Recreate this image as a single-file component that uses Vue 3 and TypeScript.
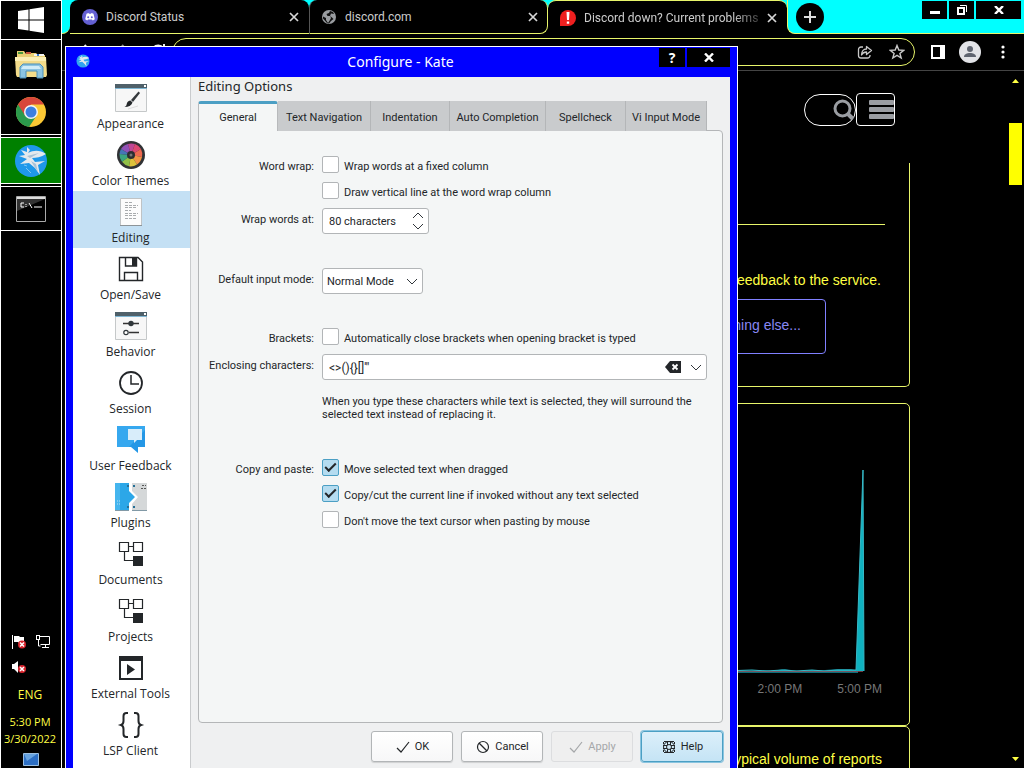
<script setup lang="ts">
import { ref } from 'vue'

interface BrowserTab { title: string; icon: 'discord' | 'globe' | 'alert'; active: boolean }

const browserTabs: BrowserTab[] = [
  { title: 'Discord Status', icon: 'discord', active: false },
  { title: 'discord.com', icon: 'globe', active: false },
  { title: 'Discord down? Current problems', icon: 'alert', active: true },
]

const sections: string[] = [
  'Appearance', 'Color Themes', 'Editing', 'Open/Save', 'Behavior', 'Session',
  'User Feedback', 'Plugins', 'Documents', 'Projects', 'External Tools', 'LSP Client',
]
const section = ref('Editing')

const pages: string[] = ['General', 'Text Navigation', 'Indentation', 'Auto Completion', 'Spellcheck', 'Vi Input Mode']
const page = ref('General')

const wrapFixed = ref(false)
const drawLine = ref(false)
const wrapAt = ref(80)
const inputMode = ref('Normal Mode')
const autoBrackets = ref(false)
const enclosing = ref('<>(){}[]\'"')
const moveDragged = ref(true)
const copyLine = ref(true)
const keepCursor = ref(false)
</script>

<template>
  <div class="desktop">
    <aside class="taskbar">
      <button class="task start" aria-label="Start">
        <svg width="28" height="26" viewBox="0 0 28 26" fill="#fff">
          <path d="M1 4 11.500 2.500V12.500H1zM12.500 2.300 27 0V12.500H12.500zM1 13.500H11.500V23.500L1 22zM12.500 13.500H27V26L12.500 23.700z" />
        </svg>
      </button>
      <button class="task explorer" aria-label="File Explorer">
        <svg width="34" height="32" viewBox="0 0 34 32">
          <path d="M3 6V2h7l2 3h4V4h6l2 2h7v6H3z" fill="#e9cf73" />
          <path d="M4 3h5v2H4z" fill="#4a9a3e" /><path d="M12 3h5v2h-5z" fill="#c8543c" /><path d="M20 5h10v2H20z" fill="#f2f2f2" /><path d="M23 5h2v2h-2z" fill="#3a78c8" />
          <path d="M1 8h31l1 18-1 2H3l-1-2z" fill="#f3dc8b" />
          <path d="M1 8h31v4H1z" fill="#fbeeb4" />
          <path d="M6 29V18l3-3h17l3 3v11h-6v-7H12v7z" fill="#8cc4e2" stroke="#4b8fb8" />
          <path d="M9 17h16l2 3H7z" fill="#d1ecf8" />
        </svg>
      </button>
      <button class="task chrome" aria-label="Google Chrome">
        <svg width="32" height="32" viewBox="0 0 32 32">
          <circle cx="16" cy="16" r="15" fill="#fbc834" />
          <path d="M16 16 3 8.500A15 15 0 0 0 14 31l8-12z" fill="#2b9a4c" />
          <path d="M3 8.500A15 15 0 0 1 29 8.500H16l-6 11z" fill="#d8463a" />
          <circle cx="16" cy="16" r="7" fill="#f4f4f4" /><circle cx="16" cy="16" r="5.500" fill="#3c7fe0" />
        </svg>
      </button>
      <button class="task kate" aria-label="Kate">
        <svg width="34" height="34" viewBox="0 0 34 34">
          <circle cx="17" cy="17" r="16" fill="#1f98ea" />
          <path d="M13 3 16 6 14 9C20 6 26 6 32 10 27 13 22 14 18 14L21 18 31 17 24 21 26 31 21 24 15 19 6 20 13 15 5 12 11 11 7 6 13 8z" fill="#e4e9ed" />
          <path d="M13 12 25 9l-9 5zM17 17l5 3 2 8-4-6z" fill="#a9c2d6" />
          <path d="M12 24l5 5M10 21l3 1" stroke="#7cc4f4" />
        </svg>
      </button>
      <button class="task cmd" aria-label="Command Prompt">
        <svg width="30" height="26" viewBox="0 0 30 26">
          <path d="M.5.5h29v25H.5z" fill="#000" stroke="#aaa" /><path d="M1 1h28v2H1z" fill="#ddd" /><path d="M1 3h28L1 15z" fill="#333" />
          <path d="M8 7H5v4h3M10 8v1M10 10v1M13 7l3 5M18 11h8" fill="none" stroke="#fff" />
        </svg>
      </button>
      <div class="tray">
        <div class="tray-icons">
          <svg width="16" height="16" viewBox="0 0 16 16">
            <path d="M1.500 1v14" stroke="#fff" /><path d="M3 2h5l1 1h4v6H8L7 8H3z" fill="#fff" />
            <circle cx="11" cy="10.500" r="4" fill="#d8232c" /><path d="m9 8.500 4 4m0-4-4 4" stroke="#fff" stroke-width="1.500" />
          </svg>
          <svg width="16" height="16" viewBox="0 0 16 16" fill="none" stroke="#fff">
            <path d="M5 2.500h9.500v8H5.500M7 13.500h7M10.500 11v2" /><rect x="1.500" y="1.500" width="3" height="4" /><path d="M3.500 6v6h2" />
          </svg>
          <svg width="16" height="16" viewBox="0 0 16 16">
            <path d="M1 5h2l4-3v12l-4-4H1z" fill="#fff" />
            <circle cx="11" cy="10" r="4" fill="#d8232c" /><path d="m9 8 4 4m0-4-4 4" stroke="#fff" stroke-width="1.500" />
          </svg>
        </div>
        <div class="lang">ENG</div>
        <div class="clock"><div>5:30 PM</div><div>3/30/2022</div></div>
        <svg class="show-desktop" width="16" height="13" viewBox="0 0 16 13"><path d="M.5.500h15v12H.5z" fill="#2d6fc4" stroke="#9bbfe0" /><path d="M1 1h13L4 8z" fill="#68a4e0" /></svg>
      </div>
    </aside>

    <main class="browser">
      <div class="tabstrip">
        <div class="lead"></div>
        <div v-for="tab in browserTabs" :key="tab.title" class="tab-slot">
          <div class="tab" :class="[{ active: tab.active }, tab.icon]">
            <svg v-if="tab.icon === 'discord'" width="16" height="16" viewBox="0 0 16 16">
              <circle cx="8" cy="8" r="8" fill="#6460d2" /><path d="M4.500 4.700 6.500 4l.5.8h2l.5-.8 2 .7 1.300 5.600-2 1.200-.8-1H6l-.8 1-2-1.200z" fill="#fff" /><circle cx="6.200" cy="8.300" r="1" fill="#6460d2" /><circle cx="9.800" cy="8.300" r="1" fill="#6460d2" />
            </svg>
            <svg v-else-if="tab.icon === 'globe'" width="16" height="16" viewBox="0 0 16 16">
              <circle cx="8" cy="8" r="7" fill="#999ca0" /><path d="M9 2 8 4 5.500 5l1 2H9l1 2-1 2-2 3-2-3V9L2 7.500v2L6 14l2 .5L10 12l2.500-2L11 8.500 9 7l1-2.500 3 .5-1-2z" fill="#111" />
            </svg>
            <svg v-else width="16" height="16" viewBox="0 0 16 16">
              <path d="M0 16V8a8 8 0 1 1 8 8z" fill="#ee1f1f" /><path d="M6.500 2h3L9 10H7zM6.800 11.500h2.400v2.200H6.800z" fill="#fff" />
            </svg>
            <span class="tab-title">{{ tab.title }}</span>
            <button class="tab-close" aria-label="Close tab">
              <svg width="10" height="10" viewBox="0 0 10 10"><path d="m1 1 8 8m0-8-8 8" stroke="#d8d8d8" stroke-width="1.700" /></svg>
            </button>
          </div>
        </div>
        <div class="strip-rest">
          <button class="new-tab" aria-label="New tab"><svg width="14" height="14" viewBox="0 0 14 14"><path d="M7 1v12M1 7h12" stroke="#ddd" stroke-width="2" /></svg></button>
          <div class="win-controls">
            <button class="wc" aria-label="Minimize"><svg width="10" height="10" viewBox="0 0 10 10"><path d="M0 6h10v3H0z" fill="#fff" /></svg></button>
            <button class="wc" aria-label="Restore"><svg width="10" height="10" viewBox="0 0 10 10" fill="none" stroke="#fff"><path d="M1 3h6v6H1z" stroke-width="2" /><path d="M3 .5h6.500V7" /></svg></button>
            <button class="wc wide" aria-label="Close window"><svg width="10" height="8" viewBox="0 0 10 8"><path d="m1 0 8 8m0-8-8 8" stroke="#fff" stroke-width="2.400" /></svg></button>
          </div>
        </div>
      </div>
      <div class="toolbar">
        <div class="nav-icons">
          <svg width="16" height="16" viewBox="0 0 16 16" fill="none" stroke="#eee" stroke-width="2"><path d="M15 8H2m6-7L2 8l6 7" /></svg>
          <svg width="16" height="16" viewBox="0 0 16 16" fill="none" stroke="#888" stroke-width="2"><path d="M1 8h13M8 1l6 7-6 7" /></svg>
          <svg width="16" height="16" viewBox="0 0 16 16" fill="none" stroke="#eee" stroke-width="2"><path d="M13 4a6 6 0 1 0 1 5M14 0v5H9" /></svg>
        </div>
        <div class="omnibox">
          <svg width="16" height="16" viewBox="0 0 16 16" fill="none" stroke="#c8c8c8" stroke-width="1.300"><path d="M6 3H4a2.500 2.500 0 0 0-2.500 2.500v6A2.500 2.500 0 0 0 4 14h6.500a2.500 2.500 0 0 0 2.500-2.500V11" /><path d="M9.500 2.500 14.500 6.500l-5 4V8C7 8 5.500 9 4.500 11 4.500 7.500 6.500 5 9.500 5z" stroke-linejoin="round" /></svg>
          <svg width="16" height="16" viewBox="0 0 16 16" fill="none" stroke="#c8c8c8" stroke-width="1.400"><path d="m8 1.500 1.800 4.500 4.900.3-3.800 3.100L12.200 14 8 11.400 3.800 14l1.300-4.600L1.300 6.300 6.200 6z" /></svg>
        </div>
        <svg class="panel-icon" width="14" height="14" viewBox="0 0 14 14"><path d="M1 1h12v12H1z" fill="none" stroke="#fff" stroke-width="2" /><path d="M9 1h4v12H9z" fill="#fff" /></svg>
        <svg class="avatar" width="22" height="22" viewBox="0 0 22 22"><circle cx="11" cy="11" r="11" fill="#e2e3e7" /><circle cx="11" cy="8" r="3" fill="#5f6470" /><path d="M5 16c0-3 3-4 6-4s6 1 6 4z" fill="#5f6470" /></svg>
        <svg class="dots" width="4" height="14" viewBox="0 0 4 14" fill="#fff"><circle cx="2" cy="2" r="1.600" /><circle cx="2" cy="7" r="1.600" /><circle cx="2" cy="12" r="1.600" /></svg>
      </div>
      <div class="viewport">
        <div class="webpage">
          <header class="site-header">
            <button class="search" aria-label="Search"><svg width="22" height="22" viewBox="0 0 22 22" fill="none" stroke="#9a9da2"><circle cx="9.500" cy="9.500" r="7.500" stroke-width="3" /><path d="m15 15 5 5" stroke-width="4" /></svg></button>
            <button class="menu" aria-label="Menu"><svg width="25" height="20" viewBox="0 0 25 20" fill="#9a9da2"><rect width="25" height="5" rx="1" /><rect y="7" width="25" height="5" rx="1" /><rect y="14" width="25" height="5" rx="1" /></svg></button>
          </header>
          <section class="card report">
            <div class="rule"></div>
            <p class="say">feedback to the service.</p>
            <a class="other" href="#other">Something else...</a>
          </section>
          <section class="card chart">
            <svg width="172" height="206" viewBox="0 0 172 206">
              <path d="M0 202l14 1 8-1 12 1 14-2 12 2 14-1 14 0 12-1 14 0 7 2V205H0z" fill="#0c6f7c" />
              <path d="M0 202.500 15 202l14 1 16-1 14 1 16-1 12 1 14-1 18 0 7-200 1 201" fill="#0fb2c0" stroke="#37bac8" />
              <path d="M0 203.500h126" stroke="#a04d58" stroke-width=".7" />
            </svg>
            <div class="times"><span>2:00 PM</span><span>5:00 PM</span></div>
          </section>
          <section class="card volume"><p>typical volume of reports</p></section>
        </div>
        <div class="scroll">
          <svg width="7" height="4" viewBox="0 0 7 4"><path d="M0 4 3.500 0 7 4z" fill="#ff4" /></svg>
          <div class="thumb"></div>
          <svg class="down" width="7" height="4" viewBox="0 0 7 4"><path d="M0 0h7L3.500 4z" fill="#ff4" /></svg>
        </div>
      </div>
    </main>

    <div class="dialog" role="dialog" aria-labelledby="dialog-title">
      <div class="titlebar">
        <svg width="14" height="14" viewBox="0 0 34 34"><circle cx="17" cy="17" r="16" fill="#2fa4f0" /><path d="M13 3 16 6 14 9C20 6 26 6 32 10 27 13 22 14 18 14L21 18 31 17 24 21 26 31 21 24 15 19 6 20 13 15 5 12 11 11 7 6 13 8z" fill="#e4e9ed" /></svg>
        <h1 id="dialog-title">Configure - Kate</h1>
        <div class="title-buttons">
          <button class="tb" aria-label="What's this">?</button>
          <button class="tb close" aria-label="Close"><svg width="10" height="9" viewBox="0 0 10 9"><path d="m1 .5 8 8m0-8-8 8" stroke="#fff" stroke-width="2.400" /></svg></button>
        </div>
      </div>
      <div class="dialog-body">
        <nav class="sections">
          <button v-for="s in sections" :key="s" class="section" :class="{ current: s === section }" @click="section = s">
            <svg width="32" height="32" viewBox="0 0 32 32" fill="none">
              <template v-if="s === 'Appearance' || s === 'Behavior'">
                <path d="M.5 3.500h31V29.500H.5z" fill="#f7f7f7" stroke="#c5c8c9" /><path d="M0 2h32v5H0z" fill="#4f6069" /><path d="M0 6.500h32" stroke="#7fb6d3" /><path d="M29 3h2v2h-2z" fill="#fff" />
                <template v-if="s === 'Appearance'"><path d="M23.500 9.500 16 18l2 2 7-9z" fill="#35393c" /><path d="m15.500 18.500 2 2c-1 3-4 4.500-8 4.500 2-1 2-2 2.500-4 .5-1.500 2-2.500 3.500-2.500z" fill="#25292b" /><path d="m13 27 10-3" stroke="#ddd" /></template>
                <template v-else><path d="M8 13.500h16M14 22.500h10" stroke="#333" stroke-width="1.300" /><circle cx="16" cy="13.500" r="2.700" fill="#30363a" /><circle cx="11" cy="22.500" r="2.200" fill="#fff" stroke="#30363a" stroke-width="1.200" /></template>
              </template>
              <template v-else-if="s === 'Color Themes'">
                <circle cx="16" cy="16" r="14" fill="#303235" />
                <path d="M16 16 6 10A11.500 11.500 0 0 1 13 4.900z" fill="#9152b7" /><path d="m16 16-3-11.100a11.500 11.500 0 0 1 7 .2z" fill="#c04795" /><path d="m16 16 4-10.900a11.500 11.500 0 0 1 6 5z" fill="#dd4872" />
                <path d="m16 16 10-5.900a11.500 11.500 0 0 1 1 8z" fill="#ef6950" /><path d="m16 16 11 2.100a11.500 11.500 0 0 1-5 7.400z" fill="#f29544" /><path d="m16 16 6 9.500a11.500 11.500 0 0 1-8 1.800z" fill="#ddc23b" /><path d="m16 16-2 11.300a11.500 11.500 0 0 1-7-4.500z" fill="#91bf47" /><path d="m16 16-9 6.800A11.500 11.500 0 0 1 4.500 15z" fill="#3aa580" /><path d="M16 16 4.500 15A11.500 11.500 0 0 1 6 10z" fill="#4576b7" />
                <circle cx="16" cy="16" r="4" fill="#2c2e31" /><circle cx="16" cy="16" r="1.500" fill="#777" />
              </template>
              <template v-else-if="s === 'Editing'">
                <path d="M5.500 2.500h21v27h-21z" fill="#fcfcfc" stroke="#bfc3c5" /><path d="M5 29.500h22" stroke="#8d9498" /><path d="M10 6.500h7M10 9.500h13M10 11.500h12M10 14.500h6M10 17.500h13M10 19.500h11M10 22.500h12" stroke="#a8abad" stroke-dasharray="3 1" />
              </template>
              <template v-else-if="s === 'Open/Save'">
                <path d="M4.500 4.500H23l4.500 4.500v18.500h-23zM10.500 5v8h11V5M9.500 27v-7.500h13V27" stroke="#232629" stroke-width="1.400" /><path d="M17 4h4v9h-4z" fill="#232629" />
              </template>
              <template v-else-if="s === 'Session'"><circle cx="16" cy="16" r="11" stroke="#232629" stroke-width="1.800" /><path d="M16 8v9h8" stroke="#232629" stroke-width="1.500" /></template>
              <template v-else-if="s === 'User Feedback'"><path d="M2 2h28v21h-7v6l-7-6H2z" fill="#2497e6" /><path d="M2 2h28v4L14 23H2z" fill="#36a8ef" /><path d="M13 5h14v11h-5l-3 3v-3h-6z" fill="#d8edfa" /></template>
              <template v-else-if="s === 'Plugins'">
                <path d="M0 2h14v8l6 6-6 6v8H0z" fill="#2ca7e8" /><path d="M0 2h5v28H0z" fill="#45b5ee" /><path d="M17 2h15v28H17v-7l6-7-6-6z" fill="#d5d8d9" /><path d="M0 29.500h14M17 29.500h15" stroke="#8199a6" /><path d="M2 20h4M2 23h4" stroke="#b8e0f5" stroke-dasharray="1 1" /><path d="M27 4.500h4M26 7.500h5" stroke="#555" stroke-dasharray="2 1" /><path d="M12 4h2v2h-2zM12 25h2v2h-2zM18 4h2v2h-2zM18 25h2v2h-2z" fill="#256f96" />
              </template>
              <template v-else-if="s === 'Documents' || s === 'Projects'">
                <path d="M4.500 4.500h9v9h-9zM18.500 4.500h9v9h-9zM14 8.500h4M9.500 14v8.500H18" stroke="#232629" stroke-width="1.200" /><path d="M18 18h10v10H18z" fill="#232629" />
              </template>
              <template v-else-if="s === 'External Tools'"><path d="M5 5h22v22H5z" stroke="#232629" stroke-width="2" /><path d="M4 4h24v5H4zM12 12v11l8-5.500z" fill="#232629" /></template>
              <template v-else><path d="M13 4h-1.500C9 4 8.500 5 8.500 7v5c0 2-1 3.500-2.500 4 1.500.5 2.500 2 2.500 4v5c0 2 .5 3 3 3H13M19 4h1.500c2.500 0 3 1 3 3v5c0 2 1 3.500 2.500 4-1.500.5-2.500 2-2.500 4v5c0 2-.5 3-3 3H19" stroke="#232629" stroke-width="2" /></template>
            </svg>
            <span>{{ s }}</span>
          </button>
        </nav>

        <div class="content">
          <h2>Editing Options</h2>
          <div class="pages" role="tablist">
            <button v-for="p in pages" :key="p" role="tab" class="page" :class="{ open: p === page }" :aria-selected="p === page" @click="page = p">{{ p }}</button>
          </div>
          <form class="panel" @submit.prevent>
            <div class="group">
              <span class="label">Word wrap:</span>
              <label class="check"><input v-model="wrapFixed" type="checkbox"><span>Wrap words at a fixed column</span></label>
              <label class="check second"><input v-model="drawLine" type="checkbox"><span>Draw vertical line at the word wrap column</span></label>
              <label class="label field-label" for="wrap-at">Wrap words at:</label>
              <div class="box spin">
                <input id="wrap-at" type="text" :value="`${wrapAt} characters`" readonly>
                <div class="steps">
                  <button type="button" aria-label="Increase" @click="wrapAt++"><svg width="12" height="7" viewBox="0 0 12 7"><path d="m1 6 5-5 5 5" fill="none" stroke="#31363b" /></svg></button>
                  <button type="button" aria-label="Decrease" @click="wrapAt--"><svg width="12" height="7" viewBox="0 0 12 7"><path d="m1 1 5 5 5-5" fill="none" stroke="#31363b" /></svg></button>
                </div>
              </div>
            </div>
            <div class="group">
              <label class="label field-label" for="mode">Default input mode:</label>
              <div class="box mode">
                <select id="mode" v-model="inputMode"><option>Normal Mode</option><option>Vi Mode</option></select>
                <svg width="12" height="7" viewBox="0 0 12 7"><path d="m1 1 5 5 5-5" fill="none" stroke="#31363b" /></svg>
              </div>
            </div>
            <div class="group">
              <span class="label">Brackets:</span>
              <label class="check"><input v-model="autoBrackets" type="checkbox"><span>Automatically close brackets when opening bracket is typed</span></label>
              <label class="label field-label" for="enclosing">Enclosing characters:</label>
              <div class="box combo">
                <input id="enclosing" v-model="enclosing" type="text">
                <button type="button" aria-label="Clear" @click="enclosing = ''"><svg width="16" height="12" viewBox="0 0 16 12"><path d="M0 6 5 0h11v12H5z" fill="#232629" /><path d="m7.500 3.500 5 5m0-5-5 5" stroke="#fff" stroke-width="1.800" /></svg></button>
                <button type="button" aria-label="Show choices"><svg width="12" height="7" viewBox="0 0 12 7"><path d="m1 1 5 5 5-5" fill="none" stroke="#31363b" /></svg></button>
              </div>
              <p class="note">When you type these characters while text is selected, they will surround the selected text instead of replacing it.</p>
            </div>
            <div class="group last">
              <span class="label">Copy and paste:</span>
              <label class="check"><input v-model="moveDragged" type="checkbox"><span>Move selected text when dragged</span></label>
              <label class="check second"><input v-model="copyLine" type="checkbox"><span>Copy/cut the current line if invoked without any text selected</span></label>
              <label class="check second"><input v-model="keepCursor" type="checkbox"><span>Don't move the text cursor when pasting by mouse</span></label>
            </div>
          </form>
          <div class="actions">
            <button class="action"><svg width="16" height="16" viewBox="0 0 16 16"><path d="m2 9 4 4 8-10" fill="none" stroke="#232629" stroke-width="1.200" /></svg>OK</button>
            <button class="action"><svg width="16" height="16" viewBox="0 0 16 16" fill="none" stroke="#232629" stroke-width="1.200"><circle cx="8" cy="8" r="5.500" /><path d="m4 4 8 8" /></svg>Cancel</button>
            <button class="action" disabled><svg width="16" height="16" viewBox="0 0 16 16"><path d="m2 9 4 4 8-10" fill="none" stroke="#a5a7a9" stroke-width="1.200" /></svg>Apply</button>
            <button class="action help"><svg width="16" height="16" viewBox="0 0 16 16" fill="none" stroke="#232629"><circle cx="8" cy="8" r="5.500" /><circle cx="8" cy="8" r="2.500" /><path d="M6.500 2v4M9.500 2v4M6.500 10v4M9.500 10v4M2 6.500h4M2 9.500h4M10 6.500h4M10 9.500h4M3 2.500h10M3 13.500h10M2.500 3v2M13.500 3v2M2.500 11v2M13.500 11v2" /></svg>Help</button>
          </div>
        </div>
      </div>
    </div>
  </div>
</template>

<style>
html, body { background: #000; overflow: hidden; }
</style>

<style scoped>
.desktop { position: relative; display: flex; height: 100vh; overflow: hidden; background: #000; font-family: "Open Sans", "Noto Sans", sans-serif; color: #232629; }
.desktop *, .desktop *::after { box-sizing: border-box; }
button { margin: 0; padding: 0; border: 0; background: none; font: inherit; color: inherit; display: flex; align-items: center; justify-content: center; }
svg { display: block; flex: none; }
h1, h2, p { margin: 0; font-weight: 400; }

.taskbar { display: flex; flex-direction: column; flex: 0 0 62px; border: 1px solid #fff; border-bottom: 0; }
.task { flex: none; height: 45px; border-bottom: 1px solid #fff; }
.task.start { height: 39px; }
.task.explorer { height: 50px; }
.task.kate { height: 47px; margin-top: 2px; border-top: 1px solid #fff; background: #008000; }
.task.cmd { height: 45px; margin-top: 2px; border-top: 1px solid #fff; }
.tray { margin-top: auto; display: flex; flex-direction: column; align-items: center; padding-right: 2px; color: #ff4; font-size: 12px; line-height: 17px; }
.tray-icons { display: grid; grid-template-columns: 16px 16px; gap: 9px 8px; padding-left: 2px; }
.lang { margin-top: 11px; }
.clock { margin-top: 10px; text-align: center; font-size: 11px; }
.show-desktop { margin: 6px 0 2px 2px; }

.browser { flex: 1; min-width: 0; display: flex; flex-direction: column; }
.tabstrip { display: flex; height: 34px; flex: none; }
.lead { width: 8px; background: #0ff; border-bottom: 1px solid #e8f56a; border-bottom-right-radius: 8px; }
.tab-slot { flex: 0 1 239px; min-width: 0; width: 239px; background: linear-gradient(#0ff 50%, #000 50%); }
.tab { height: 34px; display: flex; align-items: center; padding: 0 10px 0 12px; background: #000; border-radius: 8px 8px 0 0; border-bottom: 1px solid #e8f56a; color: #ccc; font-family: Roboto, sans-serif; font-size: 12px; }
.tab.globe { border-left: 1px solid #555; border-right: 1px solid #e8f56a; border-bottom-right-radius: 8px; padding: 0 9px 0 11px; }
.tab.active { border-bottom: 0; border-top: 1px solid #e8f56a; }
.tab-title { flex: 1; min-width: 0; margin-left: 8px; white-space: nowrap; }
.active .tab-title { -webkit-mask-image: linear-gradient(90deg, #000 85%, #0004); mask-image: linear-gradient(90deg, #000 85%, #0004); }
.tab-close { margin-left: 8px; }
.strip-rest { flex: 1; display: flex; background: #0ff; justify-content: space-between; align-items: flex-start; border-bottom: 1px solid #e8f56a; border-left: 1px solid #e8f56a; border-bottom-left-radius: 8px; }
.new-tab { width: 28px; height: 28px; margin: 3px 8px; border-radius: 50%; background: #000; }
.win-controls { display: flex; gap: 2px; padding: 1px 3px 0 0; }
.wc { width: 25px; height: 18px; background: #000; }
.wc.wide { width: 45px; }
.toolbar { display: flex; align-items: center; height: 37px; flex: none; border-bottom: 1px solid #444; }
.nav-icons { display: flex; gap: 20px; width: 110px; padding-left: 16px; }
.omnibox { flex: 1; height: 28px; border: 1px solid #e8f56a; border-radius: 14px; display: flex; align-items: center; justify-content: flex-end; gap: 16px; padding-right: 9px; }
.panel-icon { margin-left: 16px; }
.avatar { margin-left: 14px; }
.dots { margin: 0 19px 0 20px; }
.viewport { flex: 1; min-height: 0; display: flex; }
.webpage { flex: 1; min-width: 0; display: flex; flex-direction: column; padding-right: 98px; overflow: hidden; font-family: "Liberation Sans", Arial, sans-serif; }
.site-header { height: 92px; flex: none; display: flex; justify-content: flex-end; padding: 22px 15px 0 0; }
.search { width: 52px; height: 32px; margin-top: 1px; border: 1px solid #fff; border-radius: 16px; justify-content: flex-end; }
.menu { width: 39px; height: 33px; border: 1px solid #fff; border-radius: 4px; justify-content: flex-end; }
.card { flex: none; margin-left: 16px; border: 1px solid #e8f56a; border-radius: 5px; display: flex; flex-direction: column; align-items: flex-end; color: #ff4; font-size: 14px; line-height: 20px; }
.report { border-top: 0; border-radius: 0 0 5px 5px; height: 224px; padding: 61px 24px 0 0; }
.rule { align-self: stretch; height: 1px; background: #e8f56a; }
.say { margin: 45px 4px 9px 0; }
.other { margin-right: 59px; padding: 15px 24px 18px; border: 1px solid #8080ff; border-radius: 4px; color: #8888f4; text-decoration: none; }
.chart { margin-top: 16px; height: 323px; padding-top: 64px; }
.times { display: flex; gap: 35px; margin: 5px 27px 0 0; color: #777; font-size: 12px; line-height: 20px; }
.volume { height: 80px; padding: 22px 27px 0 0; }
.scroll { flex: 0 0 17px; margin-left: -1px; display: flex; flex-direction: column; align-items: center; padding: 8px 1px 7px 0; }
.thumb { width: 13px; height: 62px; margin-top: 40px; background: #ff0; }
.down { margin-top: auto; }

/* The dialog floats over the browser window. */
.dialog { position: absolute; left: 65px; right: 286px; top: 46px; bottom: 0; display: flex; flex-direction: column; border: 1px solid #fff; border-bottom: 0; padding: 0 7px; background: #00f; }
.titlebar { display: flex; flex: none; height: 30px; color: #fff; padding-left: 3px; }
.titlebar > svg { margin-top: 7px; }
.titlebar h1 { flex: 1; padding-left: 52px; text-align: center; font-family: "Noto Sans", sans-serif; font-size: 14px; line-height: 29px; }
.title-buttons { display: flex; gap: 2px; margin-top: 1px; }
.tb { width: 26px; height: 19px; background: #000; font: 700 14px "Open Sans", sans-serif; }
.tb.close { width: 43px; }
.dialog-body { flex: 1; min-height: 0; display: flex; background: #eff0f1; }
.sections { flex: 0 0 118px; overflow: hidden; background: #fff; border-right: 1px solid #c9cbcd; }
.section { width: 100%; height: 57px; flex-direction: column; justify-content: flex-start; padding: 5px 2px 0 0; font-size: 12px; line-height: 20px; }
.section.current { background: #c4e0f4; }
.content { flex: 1; min-width: 0; display: flex; flex-direction: column; padding: 0 7px 6px; font-family: Roboto, "Noto Sans", sans-serif; font-size: 11px; }
.content h2 { font-family: "Noto Sans", sans-serif; font-size: 13px; line-height: 18px; }
.pages { display: grid; grid-template-columns: 80px 93px 79px 96px 80px 81px; height: 29px; margin-top: 6px; position: relative; }
.page { background: #c9cbcd; border-right: 1px solid #b4b6b8; padding-top: 3px; white-space: nowrap; }
.page.open { height: 30px; background: #f4f6f6; border: 1px solid #b8babc; border-top: 3px solid #4b9fc4; border-bottom: 0; padding-top: 0; border-radius: 3px 3px 0 0; }
.panel { flex: 1; min-height: 0; display: flex; flex-direction: column; gap: 34px; padding: 25px 15px 0 0; border: 1px solid #b4b6b8; border-radius: 0 4px 4px 4px; background: #f4f6f6; }
.group { display: grid; grid-template-columns: 115px 1fr; gap: 8px; align-items: start; }
.label { height: 18px; line-height: 22px; text-align: right; white-space: nowrap; }
.field-label { padding-top: 1px; }
.check { display: flex; align-items: flex-start; height: 18px; line-height: 22px; gap: 5px; white-space: nowrap; }
.second, .note { grid-column: 2; }
.check input { appearance: none; flex: none; display: flex; align-items: center; justify-content: center; width: 17px; height: 17px; margin: 0; background: #fff; border: 1px solid #b2b5b7; border-radius: 2px; }
.check input:checked { background: #b5dcf0; border-color: #4b9fc4; }
.check input:checked::after { content: ""; width: 11px; height: 6px; border: solid #232629; border-width: 0 0 2px 2px; transform: translateY(-2px) rotate(-45deg); }
.box { display: flex; align-items: center; height: 26px; background: #fff; border: 1px solid #b2b5b7; border-radius: 3px; }
.box input, .box select { flex: 1; min-width: 0; height: 24px; margin: 0; padding: 1px 0 0 6px; border: 0; outline: 0; background: transparent; appearance: none; font: inherit; color: inherit; }
.spin { width: 107px; }
.steps { display: flex; flex-direction: column; gap: 4px; padding-right: 4px; }
.mode { width: 101px; position: relative; }
.box select { padding: 1px 0 0 4px; width: 100%; }
.mode svg { position: absolute; right: 4px; top: 9px; pointer-events: none; }
.combo button { margin-left: 9px; }
.combo { padding-right: 4px; }
.combo input { font-size: 12px; }
.note { margin-top: 7px; line-height: 13px; }
.last { margin-top: 4px; }
.actions { display: flex; justify-content: flex-end; gap: 8px; margin-top: 8px; }
.action { width: 82px; height: 31px; gap: 4px; background: linear-gradient(#fff, #f7f7f8); border: 1px solid #b2b5b7; border-radius: 3px; box-shadow: 0 1px 1px #0002; }
.action:disabled { background: #efefef; color: #a5a7a9; border-color: #dcdddf; box-shadow: none; }
.help { background: linear-gradient(#dceffa, #c5e4f5); border-color: #4b9fc4; box-shadow: 0 0 0 1px #8ac4df; }
</style>
